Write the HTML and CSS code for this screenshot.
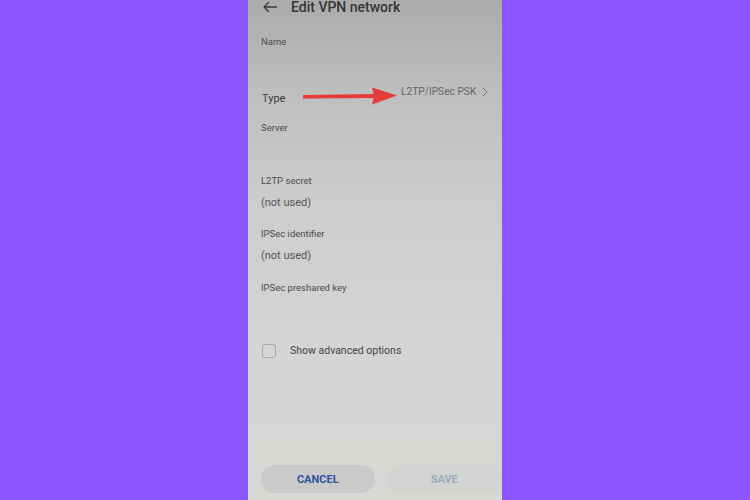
FILE: index.html
```html
<!DOCTYPE html>
<html>
<head>
    <title>Edit VPN network</title>
    <link rel="stylesheet" href="styles.css">
</head>
<body>
    <div class="screen">
        <div class="header">
            <svg class="back" width="16" height="12" viewBox="0 0 16 12">
                <path d="M15 6H2M7 1L2 6l5 5" fill="none" stroke="#3a3a3a" stroke-width="1.3"/>
            </svg>
            <h1 class="title">Edit VPN network</h1>
        </div>

        <div class="field name">Name</div>

        <div class="type-row">
            <span class="type-label">Type</span>
            <svg class="pointer" width="96" height="20" viewBox="0 0 96 20">
                <path d="M1 9L74 8L74 12L1 12.5Z" fill="#e53b3b"/>
                <path d="M70 1.5L95 9.5L70 18.5Q73 10 70 1.5Z" fill="#e53b3b"/>
            </svg>
            <span class="type-value">L2TP/IPSec PSK</span>
            <svg class="chev" width="6" height="10" viewBox="0 0 6 10">
                <path d="M1 1l4 4-4 4" fill="none" stroke="#777" stroke-width="1"/>
            </svg>
        </div>

        <div class="field server">Server</div>

        <div class="field secret">L2TP secret</div>
        <div class="value">(not used)</div>

        <div class="field ident">IPSec identifier</div>
        <div class="value">(not used)</div>

        <div class="field psk">IPSec preshared key</div>

        <div class="advanced">
            <span class="checkbox"></span>
            <span class="adv-label">Show advanced options</span>
        </div>

        <div class="buttons">
            <button class="btn cancel">CANCEL</button>
            <button class="btn save">SAVE</button>
        </div>
    </div>
</body>
</html>
```

FILE: styles.css
```css
html, body {
    margin: 0;
    height: 100%;
}
body {
    background-color: #8a55fc; /* Purple */
    font-family: Roboto, "Liberation Sans", sans-serif;
    display: flex;
    justify-content: center;
}
.screen {
    width: 254px;
    height: 500px;
    background: linear-gradient(180deg, #ababab 0%, #bebebe 18%, #cccccc 40%, #d4d4d3 65%, #d8d8d5 100%);
    display: flex;
    flex-direction: column;
    padding-left: 13px;
    box-sizing: border-box;
    color: #3a3a3a;
}
.header {
    display: flex;
    align-items: center;
    height: 14px;
}
.back {
    margin-left: 1px;
    margin-right: 13px;
}
.title {
    font-size: 14px;
    line-height: 14px;
    font-weight: 500;
    margin: 0;
    color: #363636;
}
.field {
    font-size: 9.5px;
    line-height: 12px;
    color: #4a4a4a;
}
.name {
    margin-top: 22px;
}
.type-row {
    display: flex;
    align-items: flex-start;
    margin-top: 38px;
    height: 20px;
}
.type-row > * {
    flex-shrink: 0;
}
.type-label {
    width: 40px;
    font-size: 11px;
    line-height: 13px;
    color: #3a3a3a;
    margin-left: 1px;
    margin-top: 6px;
}
.type-value {
    font-size: 10.2px;
    line-height: 12px;
    color: #666;
    margin-left: 3px;
}
.chev {
    margin-left: 6px;
    margin-top: 1px;
}
.server {
    margin-top: 16px;
}
.secret {
    margin-top: 41px;
}
.value {
    font-size: 11px;
    line-height: 14px;
    color: #555;
    margin-top: 9px;
}
.ident {
    margin-top: 18px;
}
.psk {
    margin-top: 19px;
}
.advanced {
    display: flex;
    align-items: center;
    height: 15px;
    margin-top: 49px;
}
.checkbox {
    width: 12px;
    height: 12px;
    border: 1.5px solid #a8a8a8;
    border-radius: 3px;
    margin-left: 1px;
}
.adv-label {
    font-size: 10.5px;
    color: #444;
    margin-left: 14px;
}
.buttons {
    margin-top: auto;
    margin-bottom: 7px;
    display: flex;
    gap: 12px;
}
.btn {
    border: none;
    border-radius: 14px;
    height: 28px;
    font-family: Roboto, "Liberation Sans", sans-serif;
    font-size: 11px;
    font-weight: bold;
}
.cancel {
    width: 114px;
    background-color: #c9cac9;
    color: #3553a0; /* Blue */
}
.save {
    width: 116px;
    background-color: #d3d5d3;
    color: #9aabc0;
}
```
